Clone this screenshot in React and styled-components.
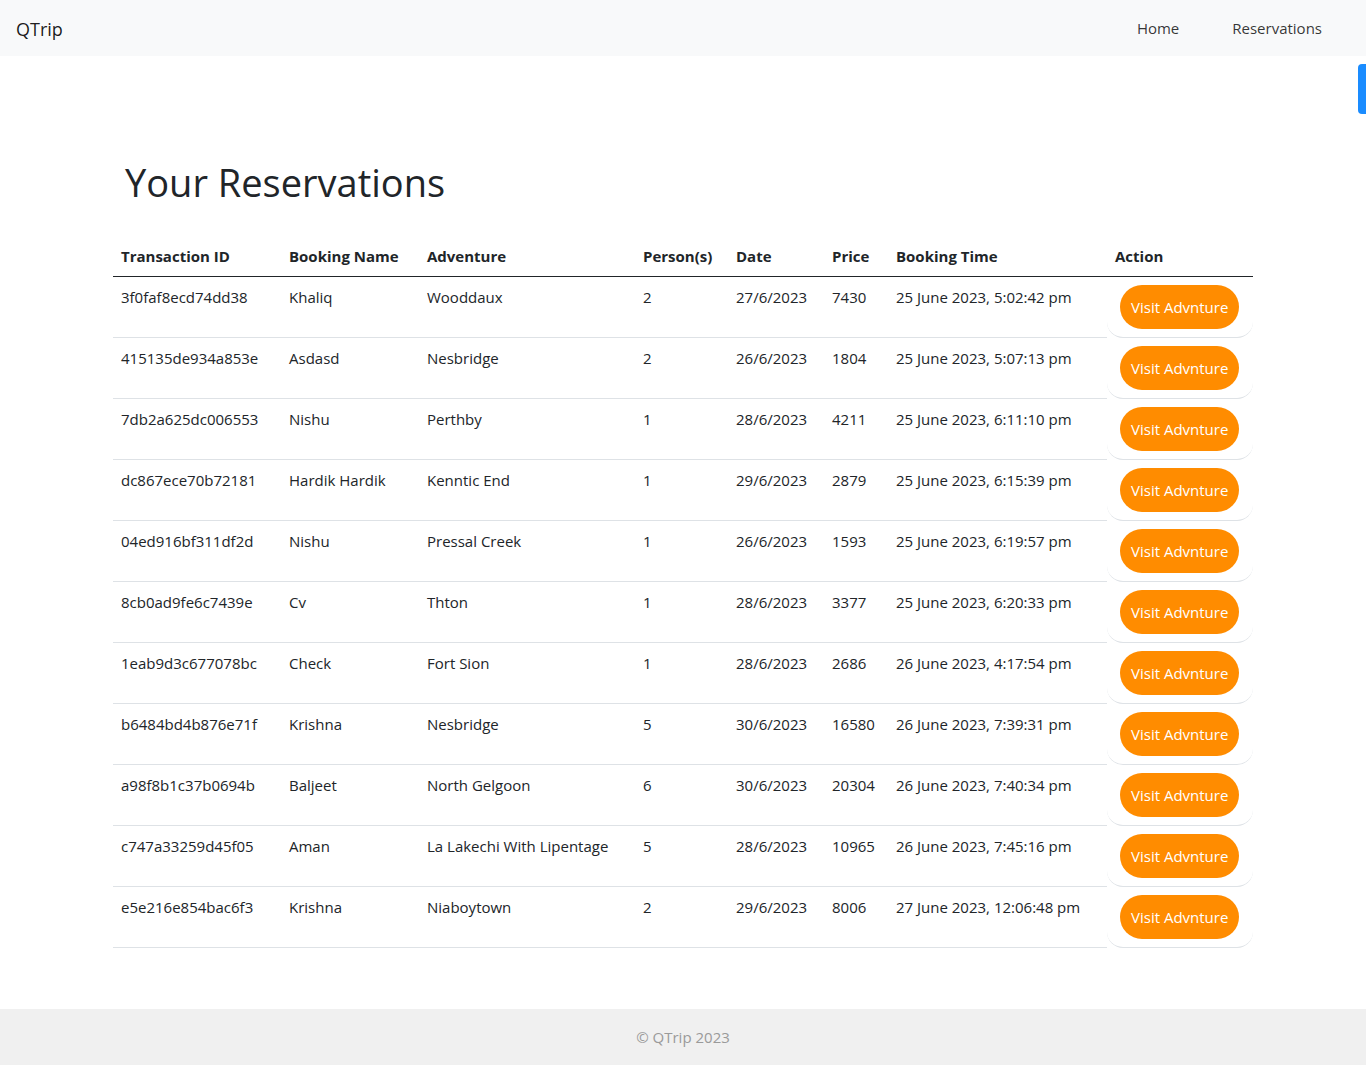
import React from "react";
import styled, { createGlobalStyle } from "styled-components";

const Global = createGlobalStyle`
  html, body { margin: 0; padding: 0; }
  body {
    font-family: "Segoe UI", "Open Sans", "Noto Sans", sans-serif;
    font-size: 15px;
    line-height: 24px;
    color: #212529;
    background: #fff;
  }
  * { box-sizing: border-box; }
`;

const Page = styled.div`
  min-height: 1065px;
  display: flex;
  flex-direction: column;
`;

const NavBar = styled.nav`
  height: 56px;
  background: #f8f9fa;
  display: flex;
  align-items: center;
  justify-content: space-between;
  padding: 0 16px;
`;

const Brand = styled.a`
  font-size: 18px;
  color: rgba(0, 0, 0, 0.9);
  text-decoration: none;
  margin-top: 1px;
`;

const NavLinks = styled.div`
  display: flex;
  gap: 53px;
  padding-right: 28px;
`;

const NavLink = styled.a`
  font-size: 15px;
  color: rgba(0, 0, 0, 0.8);
  text-decoration: none;
`;

const Main = styled.main`
  flex: 1;
  width: 1140px;
  margin: 0 auto;
  padding-top: 102px;
  padding-bottom: 61px;
`;

const Title = styled.h1`
  margin: 0 0 29px;
  padding-left: 12px;
  font-size: 38px;
  font-weight: 500;
  line-height: 48px;
`;

const Table = styled.table`
  width: 1140px;
  table-layout: fixed;
  border-collapse: separate;
  border-spacing: 0;
`;

const Th = styled.th`
  text-align: left;
  font-weight: 700;
  padding: 9px 8px 8px;
  border-bottom: 1px solid #212529;
  white-space: nowrap;
`;

const Td = styled.td`
  vertical-align: top;
  padding: 8px 8px 28px;
  border-bottom: 1px solid #dee2e6;
  white-space: nowrap;
`;

const ActionTd = styled.td`
  vertical-align: top;
  padding: 8px 8px 8px 13px;
  border-bottom: 1px solid #dee2e6;
  border-radius: 16px;
`;

const VisitButton = styled.button`
  display: block;
  height: 44px;
  padding: 0 11px;
  border: none;
  border-radius: 22px;
  background: #ff8c00;
  color: #fff;
  font-family: inherit;
  font-size: 15px;
  line-height: 44px;
  white-space: nowrap;
  cursor: pointer;
`;

const Footer = styled.footer`
  height: 56px;
  background: #f0f0f0;
  color: #9a9a9a;
  display: flex;
  align-items: center;
  justify-content: center;
  font-size: 15px;
`;

const SideTab = styled.div`
  position: fixed;
  right: 0;
  top: 64px;
  width: 8px;
  height: 50px;
  background: #1a8cff;
  border-radius: 4px 0 0 4px;
`;

const cols = [168, 138, 216, 93, 96, 64, 219, 146];

const rows = [
  ["3f0faf8ecd74dd38", "Khaliq", "Wooddaux", "2", "27/6/2023", "7430", "25 June 2023, 5:02:42 pm"],
  ["415135de934a853e", "Asdasd", "Nesbridge", "2", "26/6/2023", "1804", "25 June 2023, 5:07:13 pm"],
  ["7db2a625dc006553", "Nishu", "Perthby", "1", "28/6/2023", "4211", "25 June 2023, 6:11:10 pm"],
  ["dc867ece70b72181", "Hardik Hardik", "Kenntic End", "1", "29/6/2023", "2879", "25 June 2023, 6:15:39 pm"],
  ["04ed916bf311df2d", "Nishu", "Pressal Creek", "1", "26/6/2023", "1593", "25 June 2023, 6:19:57 pm"],
  ["8cb0ad9fe6c7439e", "Cv", "Thton", "1", "28/6/2023", "3377", "25 June 2023, 6:20:33 pm"],
  ["1eab9d3c677078bc", "Check", "Fort Sion", "1", "28/6/2023", "2686", "26 June 2023, 4:17:54 pm"],
  ["b6484bd4b876e71f", "Krishna", "Nesbridge", "5", "30/6/2023", "16580", "26 June 2023, 7:39:31 pm"],
  ["a98f8b1c37b0694b", "Baljeet", "North Gelgoon", "6", "30/6/2023", "20304", "26 June 2023, 7:40:34 pm"],
  ["c747a33259d45f05", "Aman", "La Lakechi With Lipentage", "5", "28/6/2023", "10965", "26 June 2023, 7:45:16 pm"],
  ["e5e216e854bac6f3", "Krishna", "Niaboytown", "2", "29/6/2023", "8006", "27 June 2023, 12:06:48 pm"],
];

const headers = ["Transaction ID", "Booking Name", "Adventure", "Person(s)", "Date", "Price", "Booking Time", "Action"];

export default function App() {
  return (
    <>
      <Global />
      <Page>
        <NavBar>
          <Brand href="#">QTrip</Brand>
          <NavLinks>
            <NavLink href="#">Home</NavLink>
            <NavLink href="#">Reservations</NavLink>
          </NavLinks>
        </NavBar>
        <Main>
          <Title>Your Reservations</Title>
          <Table>
            <colgroup>
              {cols.map((w, i) => (
                <col key={i} style={{ width: w }} />
              ))}
            </colgroup>
            <thead>
              <tr>
                {headers.map((h) => (
                  <Th key={h}>{h}</Th>
                ))}
              </tr>
            </thead>
            <tbody>
              {rows.map((r) => (
                <tr key={r[0]}>
                  {r.map((c, i) => (
                    <Td key={i}>{c}</Td>
                  ))}
                  <ActionTd>
                    <VisitButton>Visit Advnture</VisitButton>
                  </ActionTd>
                </tr>
              ))}
            </tbody>
          </Table>
        </Main>
        <Footer>© QTrip 2023</Footer>
        <SideTab />
      </Page>
    </>
  );
}
